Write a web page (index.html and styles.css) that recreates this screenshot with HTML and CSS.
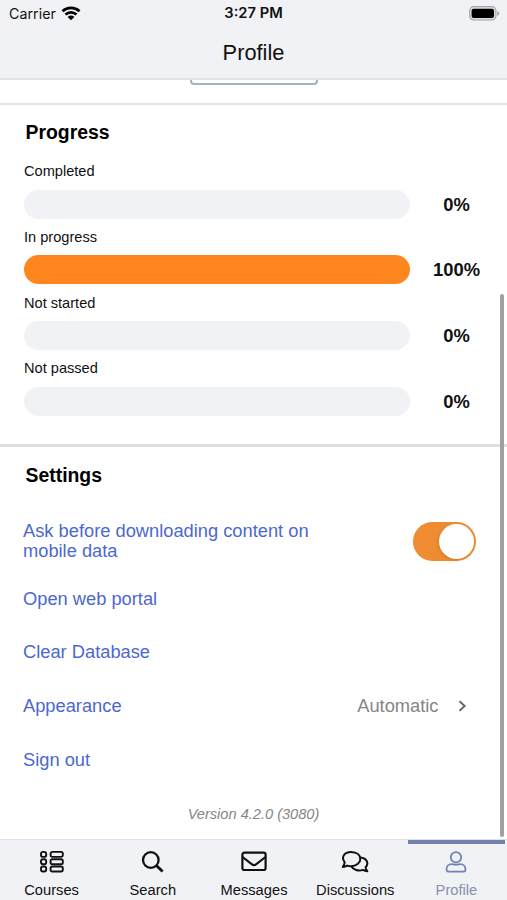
FILE: index.html
```html
<!DOCTYPE html>
<html lang="en">
<head>
<meta charset="utf-8">
<title>Profile</title>
<link rel="stylesheet" href="styles.css">
</head>
<body>
<div class="app">
  <header class="header">
    <div class="status">
      <div class="carrier"><span>Carrier</span>
        <svg width="20" height="15" viewBox="0 0 20 15"><path d="M1.500 5.200C6.200.8 13.800.8 18.500 5.200M4.500 8.600C7.600 5.700 12.400 5.700 15.500 8.600" fill="none" stroke="#000" stroke-width="2.700"/><path d="M6.600 10.900Q10 8 13.400 10.900L10 14.300Z"/></svg>
      </div>
      <span class="time">3:27 PM</span>
      <svg class="battery" width="31" height="15" viewBox="0 0 31 15"><rect x=".7" y=".7" width="26.200" height="13.300" rx="4" fill="#dedfe0" stroke="#a5a6a8" stroke-width="1.200"/><rect x="2.600" y="2.700" width="22.400" height="9.300" rx="2"/><path d="M28.300 5v5q2-.8 2-2.500T28.300 5Z" fill="#a5a6a8"/></svg>
    </div>
    <h1>Profile</h1>
  </header>
  <main class="content">
    <div class="profile-end"><div class="button-edge"></div></div>
    <section class="progress">
      <h2>Progress</h2>
      <div class="label">Completed</div>
      <div class="meter"><div class="track"></div><b>0%</b></div>
      <div class="label">In progress</div>
      <div class="meter"><div class="track full"></div><b>100%</b></div>
      <div class="label">Not started</div>
      <div class="meter"><div class="track"></div><b>0%</b></div>
      <div class="label">Not passed</div>
      <div class="meter"><div class="track"></div><b>0%</b></div>
    </section>
    <section class="settings">
      <h2>Settings</h2>
      <div class="row download"><span>Ask before downloading content on<br>mobile data</span><div class="switch"><div class="knob"></div></div></div>
      <div class="row">Open web portal</div>
      <div class="row">Clear Database</div>
      <div class="row"><span>Appearance</span><span class="value">Automatic<svg width="9" height="12" viewBox="0 0 9 12"><path d="M1.500 1.200 6.700 6 1.500 10.800" fill="none" stroke="#666" stroke-width="1.900"/></svg></span></div>
      <div class="row">Sign out</div>
    </section>
    <div class="version">Version 4.2.0 (3080)</div>
    <div class="scrollbar"></div>
  </main>
  <nav class="tabs">
    <div class="tab"><svg width="26" height="24" viewBox="0 0 26 24"><g fill="none" stroke="#111" stroke-width="1.900"><rect x="2" y="1.900" width="5.200" height="5" rx="2"/><rect x="2" y="9.200" width="5.200" height="5" rx="2"/><rect x="2" y="16.500" width="5.200" height="5" rx="2"/><rect x="11.600" y="1.900" width="12.200" height="5" rx="1.800"/><rect x="11.600" y="9.200" width="12.200" height="5" rx="1.800"/><rect x="11.600" y="16.500" width="12.200" height="5" rx="1.800"/></g></svg><span>Courses</span></div>
    <div class="tab"><svg width="26" height="24" viewBox="0 0 26 24"><g fill="none" stroke="#111" stroke-width="2.300"><circle cx="10.800" cy="10" r="7.800"/><path d="m16.300 15.500 6.300 6" stroke-width="2.900"/></g></svg><span>Search</span></div>
    <div class="tab"><svg width="28" height="24" viewBox="0 0 28 24"><g fill="none" stroke="#111" stroke-width="2.200" stroke-linejoin="round"><rect x="2.400" y="2.600" width="23.200" height="17.400" rx="2"/><path d="M2.500 7 12 14.300Q14 15.800 16 14.300L25.500 7"/></g></svg><span>Messages</span></div>
    <div class="tab"><svg width="28" height="24" viewBox="0 0 28 24"><g fill="none" stroke="#111" stroke-width="2" stroke-linejoin="round"><path d="M3.700 12.400C-.3 7 3.400 2 10 2s9.300 3.700 9.300 7.200-3.900 7.100-9.300 7.100q-2 0-3.700-.7-2 1.300-4.500 1.300 1.600-2 1.900-4.500Z"/><path d="M19.300 7.500c6.800.6 8.800 6.100 5.300 9.800q.3 2.100 1.700 3.900-2.500-.1-4.300-1.300c-4.500 1.500-9.800.1-11.600-3.600"/></g></svg><span>Discussions</span></div>
    <div class="tab active"><svg width="26" height="24" viewBox="0 0 26 24"><g fill="none" stroke="#7285b0" stroke-width="1.800" stroke-linejoin="round"><circle cx="13" cy="7.300" r="5.200"/><path d="M8.600 14.100c1.600 0 2.200.7 4.400.7s2.800-.7 4.400-.7c3 0 5.100 2.200 5.100 5.200 0 1.500-.7 2.300-2 2.300h-15c-1.300 0-2-.8-2-2.300 0-3 2.100-5.200 5.100-5.200Z"/></g></svg><span>Profile</span></div>
  </nav>
</div>
</body>
</html>
```
FILE: styles.css
```css
* { box-sizing: border-box; }
body {
  margin: 0;
  background: #fff;
  color: #111;
  font-family: "Liberation Sans", Arial, sans-serif;
}
svg { display: block; flex: none; }
.app { width: 507px; height: 900px; display: flex; flex-direction: column; overflow: hidden; }
.header { flex: none; height: 80px; background: #f1f2f6; border-bottom: 2px solid #e1e3e6; }
.status {
  height: 27px;
  padding: 0 7px 0 9px;
  display: grid;
  grid-template-columns: 1fr auto 1fr;
  align-items: center;
  font: 14.200px/27px Inter, sans-serif;
}
.carrier { display: flex; align-items: center; gap: 6px; letter-spacing: .05px; }
.carrier svg { margin: -1px 0 0 -1px; }
.time { font-weight: 600; font-size: 14.700px; margin-left: -2px; }
.battery { justify-self: end; margin-top: -1px; }
h1 { margin: 12px 0 0; text-align: center; font-size: 21.800px; line-height: 28px; font-weight: 400; }
.content { position: relative; flex: 1; min-height: 0; }
.profile-end { height: 25px; border-bottom: 2px solid #e3e5e7; }
.button-edge { width: 128px; height: 5px; margin: 0 auto; border: 2px solid #a3b1c3; border-top: 0; border-radius: 0 0 4px 4px; }
.progress { height: 342px; padding: 14px 23px 0 24px; border-bottom: 3px solid #dde0e1; }
h2 { margin: 0 0 0 1.500px; font-size: 19.400px; line-height: 26px; color: #000; }
.label { height: 20px; margin-top: 16.500px; font-size: 14.600px; line-height: 20px; }
.progress h2 + .label { margin-top: 16.400px; }
.meter { height: 29px; display: flex; align-items: center; }
.label + .meter { margin-top: 8.400px; }
.meter + .label { margin-top: 8.200px; }
.track { width: 386px; height: 29px; border-radius: 15px; background: #f1f2f6; }
.full { background: #ff861f; }
.meter b { flex: 1; margin-left: 17px; margin-right: -2px; padding-top: 1px; text-align: center; font-size: 18.400px; }
.settings { padding: 15px 31.500px 0 23px; color: #4c68cf; font-size: 18.300px; }
.settings h2 { margin-left: 2.500px; }
.row { height: 53.800px; display: flex; align-items: center; justify-content: space-between; line-height: 20.500px; }
.download { height: 62px; margin-top: 22px; }
.switch { width: 63px; height: 39px; padding: 2px; border-radius: 20px; background: #ef8c31; display: flex; justify-content: flex-end; }
.knob { width: 35px; height: 35px; border-radius: 50%; background: #fff; box-shadow: -1px 1px 3px #a65a1255; }
.value { display: flex; align-items: center; gap: 19px; color: #858585; margin-right: 9px; }
.version { color: #858585; text-align: center; font-size: 14.600px; font-style: italic; line-height: 20px; margin-top: 17px; }
.scrollbar { position: absolute; right: 3px; top: 214px; width: 4px; height: 543px; border-radius: 2px; background: #a0a0a0; }
.tabs { flex: none; height: 61px; display: flex; padding-left: 1px; background: #f1f2f6; border-top: 1px solid #dfe1e5; }
.tab { flex: 1; display: flex; flex-direction: column; align-items: center; padding-top: 10px; font-size: 14.700px; line-height: 18px; }
.tab span { margin-top: 7px; }
.active { position: relative; color: #8490ae; }
.active::before { content: ""; position: absolute; top: 0; left: 2px; right: 2px; height: 4px; background: #7082aa; }
```
